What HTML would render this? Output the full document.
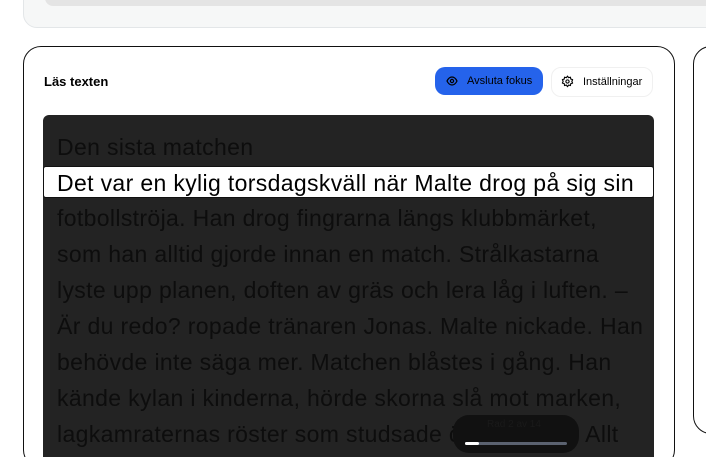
<!DOCTYPE html>
<html style="width:706px;height:457px;overflow:hidden"><head><meta charset="utf-8"><style>
body{margin:0;width:706px;height:457px;overflow:hidden;background:#fff;font-family:"Liberation Sans",sans-serif}
.wrap{position:relative;width:706px;height:457px;overflow:hidden}
.top{position:absolute;left:23px;top:-20px;width:720px;height:46px;background:#f6f7f7;border:1px solid #e3e6e8;border-radius:14px}
.topin{position:absolute;left:45px;top:-10px;width:700px;height:16px;background:#e4e4e4;border-radius:8px}
.card{position:absolute;left:23px;top:46px;width:650px;height:420px;border:1px solid #111;border-radius:18px;background:#fff}
.card2{position:absolute;left:693px;top:46px;width:60px;height:386px;border:1px solid #111;border-radius:18px}
.title{position:absolute;left:44px;top:74px;font-size:13px;font-weight:bold;color:#000}
.btn1{position:absolute;left:435px;top:67px;width:108px;height:28px;background:#2563eb;border-radius:10px;color:#000;font-size:11px}
.btn2{position:absolute;left:551px;top:67px;width:100px;height:28px;border:1px solid #f0f0f0;border-radius:10px;font-size:11px;color:#000}
.reader{position:absolute;left:43px;top:115px;width:611px;height:342px;background:#232323;border-radius:6px 6px 0 0;overflow:hidden}
.l{position:absolute;left:14px;font-size:23px;color:#0d0d0d;white-space:nowrap;letter-spacing:0.35px}
.hl{position:absolute;left:0;top:51px;width:609px;height:30px;background:#fff;border:1px solid #111;border-radius:3px}
.pill{position:absolute;left:453px;top:415px;width:126px;height:38px;background:#111;border-radius:16px}
</style></head><body><div class="wrap">
<div class="top"></div><div class="topin"></div>
<div class="card"></div><div class="card2"></div>
<div class="title">Läs texten</div>
<div class="btn1"><svg style="position:absolute;left:11px;top:8px" width="12" height="12" viewBox="0 0 12 12"><path d="M1 6C2.5 3 4 2 6 2s3.5 1 5 4c-1.5 3-3 4-5 4S2.5 9 1 6z" fill="none" stroke="#000" stroke-width="1.2"/><circle cx="6" cy="6" r="1.6" fill="none" stroke="#000" stroke-width="1.2"/></svg><span style="position:absolute;left:32px;top:8px">Avsluta fokus</span></div>
<div class="btn2"><svg style="position:absolute;left:9px;top:7px" width="13" height="13" viewBox="0 0 24 24"><circle cx="12" cy="12" r="3" fill="none" stroke="#000" stroke-width="2"/><path d="M12 2l2 3 3.5-1 .5 3.5 3.5 1-1.5 3.5 1.5 3-3.5 1-.5 3.5-3.5-1-2 3-2-3-3.5 1-.5-3.5-3.5-1 1.5-3.5L2.5 8.5 6 7.5 6.5 4 10 5z" fill="none" stroke="#000" stroke-width="2" stroke-linejoin="round"/></svg><span style="position:absolute;left:31px;top:8px">Inställningar</span></div>
<div class="reader">
<div class="hl"></div>
<div class="l" style="top:19px">Den sista matchen</div>
<div class="l" style="top:55px;color:#000">Det var en kylig torsdagskväll när Malte drog på sig sin</div>
<div class="l" style="top:90px">fotbollströja. Han drog fingrarna längs klubbmärket,</div>
<div class="l" style="top:126px">som han alltid gjorde innan en match. Strålkastarna</div>
<div class="l" style="top:162px">lyste upp planen, doften av gräs och lera låg i luften. –</div>
<div class="l" style="top:198px">Är du redo? ropade tränaren Jonas. Malte nickade. Han</div>
<div class="l" style="top:234px">behövde inte säga mer. Matchen blåstes i gång. Han</div>
<div class="l" style="top:270px">kände kylan i kinderna, hörde skorna slå mot marken,</div>
<div class="l" style="top:306px">lagkamraternas röster som studsade över planen. Allt</div>
</div>
<div class="pill"><div style="position:absolute;left:34px;top:4px;font-size:10px;color:#1a1a1a">Rad 2 av 14</div><div style="position:absolute;left:12px;top:27px;width:102px;height:3px;background:#5b6270;border-radius:2px"></div><div style="position:absolute;left:12px;top:27px;width:14px;height:3px;background:#fff;border-radius:2px"></div></div>
</div></body></html>
